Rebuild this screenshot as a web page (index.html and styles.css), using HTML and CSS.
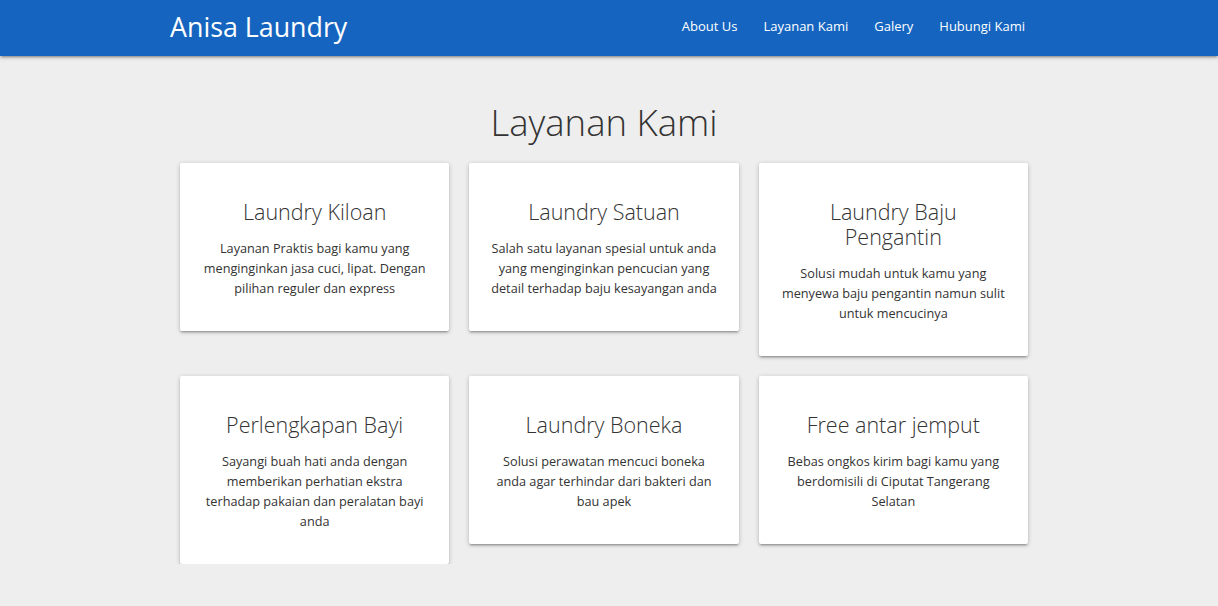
FILE: index.html
```html
<!DOCTYPE html>
<html lang="id">
<head>
<meta charset="utf-8">
<title>Anisa Laundry</title>
<link rel="stylesheet" href="styles.css">
</head>
<body>
<nav class="navbar">
  <div class="nav-inner">
    <a class="brand" href="#">Anisa Laundry</a>
    <ul class="nav-links">
      <li><a href="#">About Us</a></li>
      <li><a href="#">Layanan Kami</a></li>
      <li><a href="#">Galery</a></li>
      <li><a href="#">Hubungi Kami</a></li>
    </ul>
  </div>
</nav>
<main class="page">
  <section class="services">
    <h3 class="section-title">Layanan Kami</h3>
    <div class="grid">
      <div class="card">
        <h5 class="card-title">Laundry Kiloan</h5>
        <p class="card-text">Layanan Praktis bagi kamu yang menginginkan jasa cuci, lipat. Dengan pilihan reguler dan express</p>
      </div>
      <div class="card">
        <h5 class="card-title">Laundry Satuan</h5>
        <p class="card-text">Salah satu layanan spesial untuk anda yang menginginkan pencucian yang detail terhadap baju kesayangan anda</p>
      </div>
      <div class="card">
        <h5 class="card-title">Laundry Baju Pengantin</h5>
        <p class="card-text">Solusi mudah untuk kamu yang menyewa baju pengantin namun sulit untuk mencucinya</p>
      </div>
      <div class="card">
        <h5 class="card-title">Perlengkapan Bayi</h5>
        <p class="card-text">Sayangi buah hati anda dengan memberikan perhatian ekstra terhadap pakaian dan peralatan bayi anda</p>
      </div>
      <div class="card">
        <h5 class="card-title">Laundry Boneka</h5>
        <p class="card-text">Solusi perawatan mencuci boneka anda agar terhindar dari bakteri dan bau apek</p>
      </div>
      <div class="card">
        <h5 class="card-title">Free antar jemput</h5>
        <p class="card-text">Bebas ongkos kirim bagi kamu yang berdomisili di Ciputat Tangerang Selatan</p>
      </div>
    </div>
  </section>
</main>
</body>
</html>
```
FILE: styles.css
```css
* { box-sizing: border-box; }
html, body { margin: 0; padding: 0; }
body {
  background: #eeeeee;
  font-family: "Open Sans", "Noto Sans", sans-serif;
  color: #333;
  padding-right: 10px;
}
a { text-decoration: none; color: inherit; }

.navbar {
  background: #1565c0;
  height: 56px;
  margin-right: -10px;
  padding-right: 10px;
  box-shadow: 0 2px 2px 0 rgba(0,0,0,0.14), 0 3px 1px -2px rgba(0,0,0,0.12), 0 1px 5px 0 rgba(0,0,0,0.2);
}
.nav-inner {
  width: 870px;
  margin: 0 auto;
  height: 56px;
  display: flex;
  align-items: flex-start;
  justify-content: space-between;
}
.brand {
  color: #fff;
  font-size: 26.8px;
  padding-left: 1px;
  line-height: 53px;
}
.nav-links {
  list-style: none;
  margin: 0;
  padding: 0 14px 0 0;
  display: flex;
  gap: 26px;
}
.nav-links a {
  display: block;
  color: #fff;
  font-size: 13px;
  line-height: 52px;
}

.services {
  width: 848px;
  margin: 0 auto;
  padding-top: 44px;
}
.section-title {
  margin: 0 0 19px;
  text-align: center;
  font-weight: 300;
  font-size: 36.5px;
  line-height: 44px;
  color: #333;
}
.grid {
  display: grid;
  grid-template-columns: repeat(3, 1fr);
  gap: 20px;
  align-items: start;
}
.card {
  background: #fff;
  border-radius: 2px;
  padding: 36px 20px 33px;
  text-align: center;
  box-shadow: 0 2px 2px 0 rgba(0,0,0,0.14), 0 3px 1px -2px rgba(0,0,0,0.12), 0 1px 5px 0 rgba(0,0,0,0.2);
}
.card-title {
  margin: 0 0 14px;
  padding: 0 6px;
  font-size: 21.5px;
  font-weight: 300;
  line-height: 25px;
  color: #333;
}
.card-text {
  margin: 0;
  font-size: 12.7px;
  line-height: 20px;
  color: #333;
}
```
